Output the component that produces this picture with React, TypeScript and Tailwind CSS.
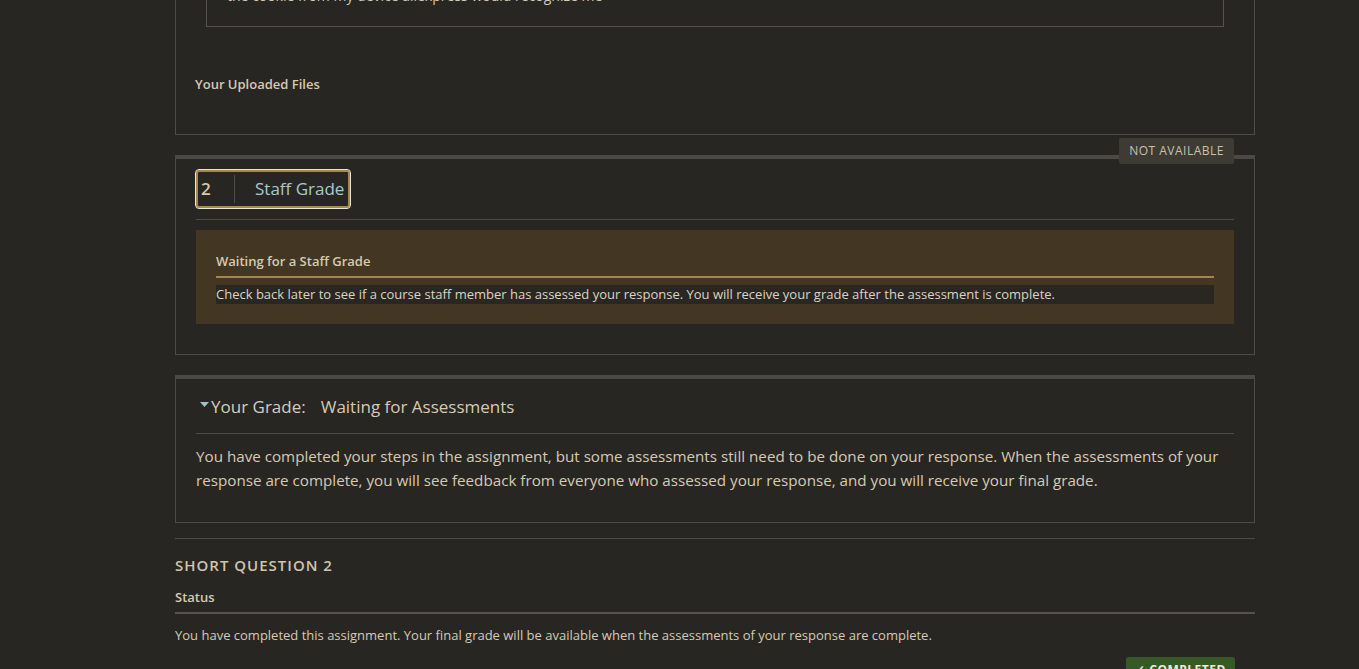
import React from "react";

const font = { fontFamily: '"Open Sans", "Noto Sans", sans-serif' };

export default function App() {
  return (
    <div className="min-h-[669px] w-full overflow-hidden bg-[#282622] text-[#d6cab4]" style={font}>
      <div className="ml-[175px] -mt-[57px] flex w-[1080px] flex-col">
        {/* Section 1 */}
        <div className="border border-[#4e4c46] px-[19px] pt-[21px] pb-[40px]">
          <div className="mx-[11px] border border-[#55534c] px-[20px] pt-[20px] pb-[20px] text-[14px] leading-[20px]">
            the cookie from my device aliexpress would recognize me
          </div>
          <div className="mt-[47px] text-[13px] font-semibold leading-[20px] text-[#d6cab4]">Your Uploaded Files</div>
        </div>

        {/* Section 2 */}
        <div className="relative mt-[20px] border border-t-4 border-[#4e4c46] border-t-[#4b4943] px-[20px] pb-[30px]">
          <div className="absolute -top-[21px] right-[20px] rounded-[2px] bg-[#3e3b34] px-[10px] text-[12px] leading-[26px] tracking-[0.5px] text-[#c9c0ad]">
            NOT AVAILABLE
          </div>
          <div className="mt-[11px] flex">
            <div className="flex h-[38px] w-[154px] items-center rounded-[3px] border-2 border-[#a8894c] outline outline-1 outline-[#e8e4da]">
              <span className="w-[36px] pl-[3px] text-[17px] font-semibold text-[#d8c8ad]">2</span>
              <span className="h-[28px] w-px bg-[#4e4c46]" />
              <span className="pl-[20px] text-[17px] text-[#a9c9cf]">Staff Grade</span>
            </div>
          </div>
          <div className="mt-[11px] h-px bg-[#4e4c46]" />
          <div className="mt-[10px] bg-[#433723] px-[20px] pt-[21px] pb-[20px]">
            <div className="border-b-2 border-[#a48847] pb-[4px] text-[13px] font-semibold leading-[21px] text-[#d6cab0]">
              Waiting for a Staff Grade
            </div>
            <div className="mt-[7px] bg-[#2a2723] text-[13px] leading-[19px] text-[#ddd3c0]">
              Check back later to see if a course staff member has assessed your response. You will receive your grade after the assessment is complete.
            </div>
          </div>
        </div>

        {/* Section 3 */}
        <div className="mt-[20px] border border-t-4 border-[#4e4c46] border-t-[#4b4943] px-[20px] pb-[30px]">
          <div className="mt-[14px] flex h-[28px] items-center text-[17px]">
            <svg width="9" height="6" viewBox="0 0 9 6" className="ml-[4px] mr-[2px] -mt-[4px]">
              <path d="M0 0 L9 0 L4.5 5 Z" fill="#9dc3d2" />
            </svg>
            <span className="text-[#d0cfc0]">Your Grade:</span>
            <span className="ml-[15px] text-[#d6cab4]">Waiting for Assessments</span>
          </div>
          <div className="mt-[12px] h-px bg-[#4e4c46]" />
          <p className="mt-[10px] text-[15.2px] leading-[24px] text-[#d6cab4]">
            You have completed your steps in the assignment, but some assessments still need to be done on your response. When the assessments of your response are complete, you will see feedback from everyone who assessed your response, and you will receive your final grade.
          </p>
        </div>

        <div className="mt-[15px] h-px bg-[#4e4c46]" />
        <div className="mt-[15px] text-[15px] font-semibold uppercase leading-[22px] tracking-[1px] text-[#d2c5ac]">Short Question 2</div>
        <div className="mt-[11px] text-[13px] font-semibold leading-[20px] text-[#d6cab4]">Status</div>
        <div className="mt-[5px] h-[2px] bg-[#55534c]" />
        <div className="mt-[11px] text-[13px] leading-[20px] text-[#d6cab4]">
          You have completed this assignment. Your final grade will be available when the assessments of your response are complete.
        </div>
        <div className="mt-[12px] flex justify-end pr-[20px]">
          <div className="w-[109px] rounded-t-[3px] bg-[#355a26] pt-[4px] text-center text-[12px] font-bold tracking-[0.5px] text-[#f0ecd8]">
            ✓ COMPLETED
          </div>
        </div>
      </div>
    </div>
  );
}
